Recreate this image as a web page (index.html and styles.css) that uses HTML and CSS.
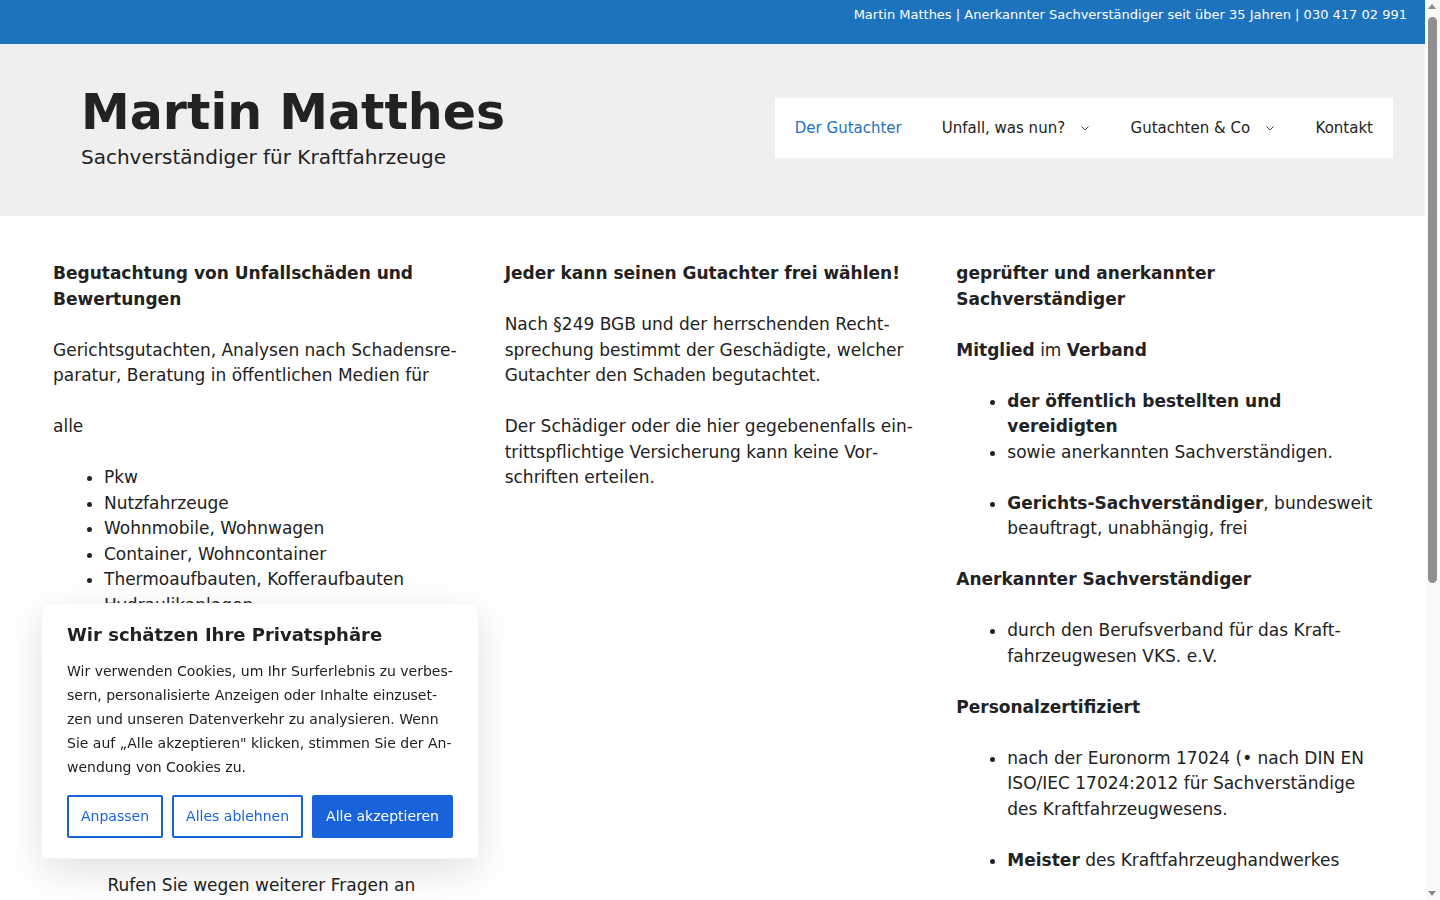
FILE: index.html
```html
<!DOCTYPE html>
<html lang="de">
<head>
    <meta charset="UTF-8">
    <title>Martin Matthes – Sachverständiger für Kraftfahrzeuge</title>
    <link rel="stylesheet" href="styles.css">
</head>
<body>

    <div class="top-bar">
        <div class="top-bar-text">Martin Matthes | Anerkannter Sachverständiger seit über 35 Jahren | 030 417 02 991</div>
    </div>

    <header class="site-header">
        <div class="site-branding">
            <p class="site-title">Martin Matthes</p>
            <p class="site-description">Sachverständiger für Kraftfahrzeuge</p>
        </div>
        <nav class="main-nav">
            <a href="#" class="current">Der Gutachter</a>
            <a href="#">Unfall, was nun?<svg class="caret" viewBox="0 0 8 5" width="8" height="5"><polyline points="0.5,0.5 4,4 7.5,0.5"/></svg></a>
            <a href="#">Gutachten &amp; Co<svg class="caret" viewBox="0 0 8 5" width="8" height="5"><polyline points="0.5,0.5 4,4 7.5,0.5"/></svg></a>
            <a href="#">Kontakt</a>
        </nav>
    </header>

    <main class="site-content">
        <div class="col">
            <p><strong>Begutachtung von Unfallschäden und Bewertungen</strong></p>
            <p>Gerichtsgutachten, Analysen nach Schadensre&shy;paratur, Beratung in öffentlichen Medien für</p>
            <p>alle</p>
            <ul>
                <li>Pkw</li>
                <li>Nutzfahrzeuge</li>
                <li>Wohnmobile, Wohnwagen</li>
                <li>Container, Wohncontainer</li>
                <li>Thermoaufbauten, Kofferaufbauten</li>
                <li>Hydraulikanlagen</li>
                <li>Anhänger, Auflieger</li>
                <li>Landmaschinen</li>
                <li>Motorräder</li>
                <li>Oldtimer</li>
            </ul>
            <p>Schnelle Besichtigung vor Ort, auch am Wochenende.</p>
            <p>Kostenlose Erstberatung im Schadensfall.</p>
            <p class="centered">Rufen Sie wegen weiterer Fragen an</p>
            <p class="centered"><strong>030 417 02 991</strong></p>
        </div>

        <div class="col">
            <p><strong>Jeder kann seinen Gutachter frei wählen!</strong></p>
            <p>Nach §249 BGB und der herrschenden Recht&shy;sprechung bestimmt der Geschädigte, welcher Gutachter den Schaden begutachtet.</p>
            <p>Der Schädiger oder die hier gegebenenfalls ein&shy;trittspflichtige Versicherung kann keine Vor&shy;schriften erteilen.</p>
        </div>

        <div class="col">
            <p><strong>geprüfter und anerkannter Sachverständiger</strong></p>
            <p><strong>Mitglied</strong> im <strong>Verband</strong></p>
            <ul>
                <li><strong>der öffentlich bestellten und vereidigten</strong></li>
                <li>sowie anerkannten Sachverständigen.</li>
            </ul>
            <ul>
                <li><strong>Gerichts-Sachverständiger</strong>, bundesweit beauftragt, unabhängig, frei</li>
            </ul>
            <p><strong>Anerkannter Sachverständiger</strong></p>
            <ul>
                <li>durch den Berufsverband für das Kraft&shy;fahrzeugwesen VKS. e.V.</li>
            </ul>
            <p><strong>Personalzertifiziert</strong></p>
            <ul>
                <li>nach der Euronorm 17024 (• nach DIN EN ISO/IEC 17024:2012 für Sachverständige des Kraftfahrzeugwesens.</li>
            </ul>
            <ul>
                <li><strong>Meister</strong> des Kraftfahrzeughandwerkes</li>
            </ul>
        </div>
    </main>

    <footer class="site-footer">
        <div class="footer-widgets">
            <div>
                <p><strong>Kontakt</strong></p>
                <p>Martin Matthes<br>Telefon 030 417 02 991</p>
            </div>
            <div>
                <p><strong>Informationen</strong></p>
                <p>Impressum<br>Datenschutzerklärung</p>
            </div>
        </div>
        <div class="site-info">© 2024 Martin Matthes</div>
    </footer>

    <!-- Cookie-Hinweis -->
    <div class="cookie-banner">
        <p class="cookie-title">Wir schätzen Ihre Privatsphäre</p>
        <p class="cookie-text">Wir verwenden Cookies, um Ihr Surferlebnis zu verbes&shy;sern, personalisierte Anzeigen oder Inhalte einzuset&shy;zen und unseren Datenverkehr zu analysieren. Wenn Sie auf „Alle akzeptieren" klicken, stimmen Sie der An&shy;wendung von Cookies zu.</p>
        <div class="cookie-buttons">
            <button class="btn">Anpassen</button>
            <button class="btn">Alles ablehnen</button>
            <button class="btn btn-accept">Alle akzeptieren</button>
        </div>
    </div>

    <!-- Bildlaufleiste -->
    <div class="scrollbar">
        <span class="scroll-arrow up"></span>
        <span class="scroll-thumb"></span>
        <span class="scroll-arrow down"></span>
    </div>

</body>
</html>
```

FILE: styles.css
```css
* {
    box-sizing: border-box;
}

body {
    margin: 0;
    padding-right: 15px;
    background: #ffffff;
    color: #222222;
    font-family: "DejaVu Sans", "Noto Sans", sans-serif;
    font-size: 17px;
    line-height: 1.5;
}

p {
    margin: 0 0 1.5em;
}

ul {
    margin: 0 0 1.5em 3em;
    padding: 0;
}

a {
    text-decoration: none;
}

/* Top-Bar */
.top-bar {
    height: 44px;
    padding: 5px 18px 0;
    background: #1e73be;
    color: #ffffff;
    font-size: 13px;
    text-align: right;
}

/* Header */
.site-header {
    display: flex;
    justify-content: space-between;
    align-items: center;
    height: 172px;
    padding: 0 32px 4px 81px;
    background: #efefef;
}

.site-title {
    margin: 0;
    font-size: 49px;
    font-weight: bold;
    line-height: 1.2;
}

.site-description {
    margin: 0;
    font-size: 20px;
    line-height: 1.5;
}

.main-nav {
    display: flex;
    background: #ffffff;
}

.main-nav a {
    display: flex;
    align-items: center;
    padding: 0 20px;
    color: #222222;
    font-size: 15px;
    line-height: 60px;
}

.main-nav a.current {
    color: #1e73be;
}

.caret {
    margin: 1px 1.5px 0 16px;
    fill: none;
    stroke: #444444;
    stroke-width: 1;
}

/* Inhalt */
.site-content {
    display: grid;
    grid-template-columns: repeat(3, 1fr);
    gap: 35px;
    padding: 45px 52px 40px 53px;
}

.centered {
    text-align: center;
}

/* Footer */
.site-footer {
    background: #222222;
    color: #ffffff;
}

.footer-widgets {
    display: grid;
    grid-template-columns: repeat(2, 1fr);
    gap: 36px;
    padding: 40px 53px 20px;
    font-size: 15px;
}

.site-info {
    padding: 20px 53px;
    background: #1a1a1a;
    font-size: 14px;
    text-align: center;
}

/* Cookie-Hinweis */
.cookie-banner {
    position: fixed;
    left: 41px;
    bottom: 41px;
    width: 438px;
    padding: 20px 25px;
    background: #ffffff;
    border: 1px solid #f4f4f4;
    border-radius: 6px;
    box-shadow: 0 12px 40px rgba(0, 0, 0, 0.12);
    color: #212121;
}

.cookie-title {
    margin: 0 0 13px;
    font-size: 18px;
    font-weight: bold;
    line-height: 22px;
}

.cookie-text {
    margin: 0 0 16px;
    font-size: 14px;
    line-height: 24px;
}

.cookie-buttons {
    display: flex;
    gap: 9px;
}

.btn {
    flex: auto;
    padding: 8px;
    background: transparent;
    border: 2px solid #1863dc;
    border-radius: 2px;
    color: #1863dc;
    font-family: inherit;
    font-size: 14px;
    line-height: 23px;
}

.btn-accept {
    background: #1863dc;
    color: #ffffff;
}

/* Bildlaufleiste */
.scrollbar {
    position: fixed;
    top: 0;
    right: 0;
    width: 15px;
    height: 100vh;
    background: #fafafa;
}

.scroll-thumb {
    position: absolute;
    top: 17px;
    left: 3px;
    width: 9px;
    height: 566px;
    border-radius: 5px;
    background: #8f8f8f;
}

.scroll-arrow {
    position: absolute;
    left: 3px;
    width: 0;
    height: 0;
    border-left: 4.5px solid transparent;
    border-right: 4.5px solid transparent;
}

.scroll-arrow.up {
    top: 4px;
    border-bottom: 5px solid #8a8a8a;
}

.scroll-arrow.down {
    bottom: 4px;
    border-top: 5px solid #8a8a8a;
}
```
